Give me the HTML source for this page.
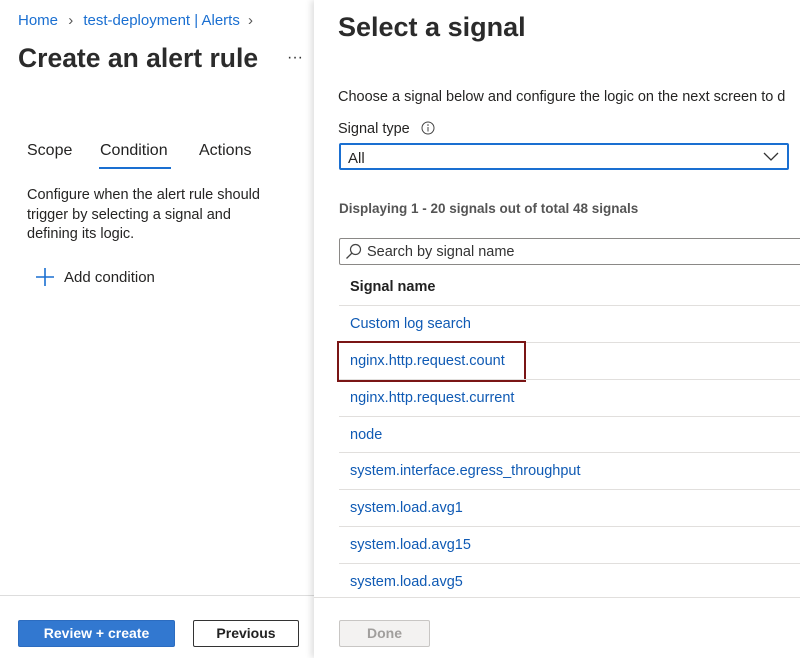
<!DOCTYPE html>
<html><head><meta charset="utf-8"><style>
*{margin:0;padding:0;box-sizing:border-box}
body{width:800px;height:658px;overflow:hidden;background:#fff;font-family:"Liberation Sans",sans-serif;color:#252423;position:relative}
.a{position:absolute;white-space:nowrap}
.link{color:#0f5ab4}
.row{position:absolute;left:339px;width:461px;height:1px;background:#e1dfdd}
.btn{position:absolute;height:27px;border-radius:2px;font-size:14px;font-weight:bold;text-align:center;line-height:25px}
</style></head><body>
<div class="a link" style="left:18px;top:12px;font-size:15px;color:#1a6fd1">Home <span style="color:#555;margin:0 6px">›</span> test-deployment | Alerts <span style="color:#555;margin-left:4px">›</span></div>
<div class="a" style="left:18px;top:43px;font-size:26.5px;font-weight:bold;color:#2b2b2b">Create an alert rule</div>
<div class="a" style="left:287px;top:49px;font-size:16px;color:#333">···</div>
<div class="a" style="left:27px;top:142px;font-size:16px">Scope</div>
<div class="a" style="left:100px;top:142px;font-size:16px;color:#222">Condition</div>
<div class="a" style="left:99px;top:167px;width:72px;height:2px;background:#1a6fd1"></div>
<div class="a" style="left:199px;top:142px;font-size:16px">Actions</div>
<div class="a" style="left:27px;top:186px;font-size:14.5px;line-height:19.5px;white-space:normal;width:250px">Configure when the alert rule should trigger by selecting a signal and defining its logic.</div>
<svg class="a" style="left:36px;top:268px" width="18" height="18"><path d="M9 0V18M0 9H18" stroke="#1a6fd1" stroke-width="1.6"/></svg>
<div class="a" style="left:64px;top:269px;font-size:15px">Add condition</div>
<div class="a" style="left:0;top:595px;width:315px;height:1px;background:#ddd"></div>
<div class="btn" style="left:18px;top:620px;width:157px;background:#3278d0;color:#fff;border:1px solid #2c6cc0">Review + create</div>
<div class="btn" style="left:193px;top:620px;width:106px;border:1px solid #333;color:#222">Previous</div>

<div class="a" style="left:314px;top:0;width:486px;height:658px;background:#fff;box-shadow:-3px 0 6px rgba(0,0,0,0.12)"></div>
<div class="a" style="left:338px;top:12px;font-size:27px;font-weight:bold;color:#2b2b2b">Select a signal</div>
<div class="a" style="left:338px;top:89px;font-size:14.5px">Choose a signal below and configure the logic on the next screen to d</div>
<div class="a" style="left:338px;top:121px;font-size:14.5px">Signal type</div>
<svg class="a" style="left:421px;top:121px" width="14" height="14"><circle cx="7" cy="7" r="6" fill="none" stroke="#444"/><path d="M7 6V10.5" stroke="#444"/><circle cx="7" cy="4" r=".8" fill="#444"/></svg>
<div class="a" style="left:339px;top:143px;width:450px;height:27px;border:2px solid #1a6fd1;border-radius:2px"></div>
<div class="a" style="left:348px;top:150px;font-size:15px">All</div>
<svg class="a" style="left:763px;top:152px" width="16" height="10"><path d="M1 1L8 8L15 1" fill="none" stroke="#333" stroke-width="1.3"/></svg>
<div class="a" style="left:339px;top:201px;font-size:13.5px;font-weight:bold;color:#555">Displaying 1 - 20 signals out of total 48 signals</div>
<div class="a" style="left:339px;top:238px;width:470px;height:27px;border:1px solid #8a8886;border-radius:2px"></div>
<svg class="a" style="left:345px;top:243px" width="17" height="17"><circle cx="10.5" cy="6.5" r="5" fill="none" stroke="#444" stroke-width="1.2"/><path d="M7 10L1.5 15.5" stroke="#444" stroke-width="1.3"/></svg>
<div class="a" style="left:367px;top:244px;font-size:14.5px;color:#333">Search by signal name</div>
<div class="a" style="left:350px;top:279px;font-size:14.5px;font-weight:bold;color:#222">Signal name</div>
<div class="row" style="top:305px"></div>
<div class="a link" style="left:350px;top:316px;font-size:14.5px">Custom log search</div>
<div class="row" style="top:342px"></div>
<div class="a link" style="left:350px;top:353px;font-size:14.5px">nginx.http.request.count</div>
<div class="a" style="left:337px;top:341px;width:189px;height:41px;border:2px solid #7a1515"></div>
<div class="row" style="top:379px"></div>
<div class="a link" style="left:350px;top:390px;font-size:14.5px">nginx.http.request.current</div>
<div class="row" style="top:416px"></div>
<div class="a link" style="left:350px;top:427px;font-size:14.5px">node</div>
<div class="row" style="top:452px"></div>
<div class="a link" style="left:350px;top:463px;font-size:14.5px">system.interface.egress_throughput</div>
<div class="row" style="top:489px"></div>
<div class="a link" style="left:350px;top:500px;font-size:14.5px">system.load.avg1</div>
<div class="row" style="top:526px"></div>
<div class="a link" style="left:350px;top:537px;font-size:14.5px">system.load.avg15</div>
<div class="row" style="top:563px"></div>
<div class="a link" style="left:350px;top:574px;font-size:14.5px">system.load.avg5</div>
<div class="row" style="top:597px;left:314px;width:486px"></div>
<div class="btn" style="left:339px;top:620px;width:91px;background:#f3f2f1;border:1px solid #c8c6c4;color:#a19f9d">Done</div>
</body></html>
